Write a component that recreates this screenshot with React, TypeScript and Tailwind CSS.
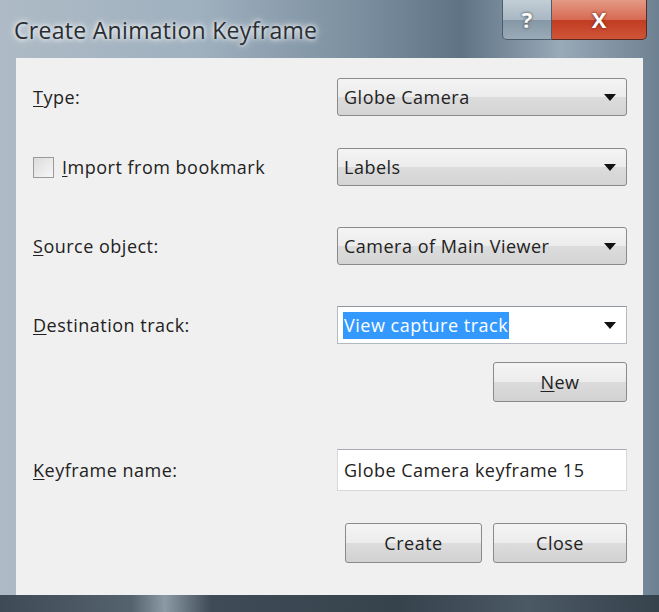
import React from 'react';

const ui = { fontFamily: '"Open Sans", "Noto Sans", Arial, sans-serif' };

function Arrow() {
  return (
    <svg width="12" height="7" viewBox="0 0 12 7" className="shrink-0">
      <path d="M0 0 H12 L6 7 Z" fill="#111" />
    </svg>
  );
}

function DropList({ value }: { value: string }) {
  return (
    <div className="h-[38px] w-[290px] flex items-center justify-between rounded-[3px] border border-[#8a8a8a] bg-[linear-gradient(#f4f4f4,#ececec_50%,#dcdcdc_51%,#d4d4d4)] pl-[6px] pr-[10px] text-[18px] tracking-[0.5px] text-[#222]">
      <span>{value}</span>
      <Arrow />
    </div>
  );
}

function Btn({ children, w }: { children: React.ReactNode; w: string }) {
  return (
    <div className={`${w} h-[40px] flex items-center justify-center rounded-[3px] border border-[#8a8a8a] bg-[linear-gradient(#f4f4f4,#ececec_50%,#dcdcdc_51%,#d2d2d2)] text-[18px] tracking-[0.5px] text-[#222]`}>
      {children}
    </div>
  );
}

function Label({ k, rest }: { k: string; rest: string }) {
  return (
    <span className="text-[18px] tracking-[0.5px] text-[#222]">
      <span className="underline underline-offset-2">{k}</span>
      {rest}
    </span>
  );
}

export default function App() {
  return (
    <div
      style={ui}
      className="w-[659px] h-[612px] flex flex-col bg-[linear-gradient(90deg,#aebbc6,#9fb0be_30%,#7a8e9f_55%,#5f7385_70%,#98a9b7_85%,#6e8192)]"
    >
      {/* title bar */}
      <div className="h-[58px] flex items-start justify-between pl-[14px] pr-[12px]">
        <div className="pt-[13px] text-[23px] text-[#2a2e33] tracking-[0.3px] [text-shadow:0_0_8px_#ffffff,0_0_4px_#ffffff]">
          Create Animation Keyframe
        </div>
        <div className="flex h-[40px]">
          <div className="w-[50px] h-full flex items-center justify-center rounded-bl-[5px] border border-t-0 border-[#4d5d6b] bg-[linear-gradient(#c3ced6,#a9b8c4_50%,#8597a6_51%,#9aaab7)] text-[22px] font-bold text-white [text-shadow:0_0_3px_#333]">
            ?
          </div>
          <div className="w-[95px] h-full flex items-center justify-center rounded-br-[5px] border border-t-0 border-l-0 border-[#5a2a22] bg-[linear-gradient(#e49a86,#d76a52_50%,#c23c22_51%,#cf5538)] text-[22px] font-bold text-white [text-shadow:0_0_3px_#5a1a10]">
            X
          </div>
        </div>
      </div>

      {/* client area */}
      <div className="flex-1 flex mx-[16px]">
        <div className="flex-1 bg-[#f0f0f0] flex flex-col pl-[17px] pr-[16px] pt-[20px]">
          <div className="flex items-center justify-between">
            <Label k="T" rest="ype:" />
            <DropList value="Globe Camera" />
          </div>

          <div className="flex items-center justify-between mt-[32px]">
            <div className="flex items-center gap-[8px]">
              <div className="w-[21px] h-[21px] border border-[#9a9a9a] bg-[linear-gradient(135deg,#dcdcdc,#f6f6f6)]" />
              <Label k="I" rest="mport from bookmark" />
            </div>
            <DropList value="Labels" />
          </div>

          <div className="flex items-center justify-between mt-[41px]">
            <Label k="S" rest="ource object:" />
            <DropList value="Camera of Main Viewer" />
          </div>

          <div className="flex items-center justify-between mt-[41px]">
            <Label k="D" rest="estination track:" />
            <div className="h-[38px] w-[290px] flex items-center justify-between border border-[#b5b9c0] border-t-[#8e959e] bg-white pl-[5px] pr-[10px] text-[18px] tracking-[0.5px]">
              <span className="bg-[#3399ff] text-white px-[1px] leading-[27px]">View capture track</span>
              <Arrow />
            </div>
          </div>

          <div className="flex justify-end mt-[18px]">
            <Btn w="w-[134px]">
              <span>
                <span className="underline underline-offset-2">N</span>ew
              </span>
            </Btn>
          </div>

          <div className="flex items-center justify-between mt-[47px]">
            <Label k="K" rest="eyframe name:" />
            <div className="h-[42px] w-[290px] flex items-center border border-[#d5d8dc] border-t-[#a9adb3] bg-white pl-[6px] text-[18px] tracking-[0.5px] text-[#222]">
              Globe Camera keyframe 15
            </div>
          </div>

          <div className="flex justify-end gap-[11px] mt-[32px]">
            <Btn w="w-[137px]">Create</Btn>
            <Btn w="w-[134px]">Close</Btn>
          </div>
        </div>
      </div>

      {/* bottom frame */}
      <div className="h-[17px] bg-[linear-gradient(90deg,#3e4a55,#55636f_20%,#8c9aa6_25%,#3f4c57_32%,#36424c_60%,#4b5965_80%,#36424c)]" />
    </div>
  );
}
